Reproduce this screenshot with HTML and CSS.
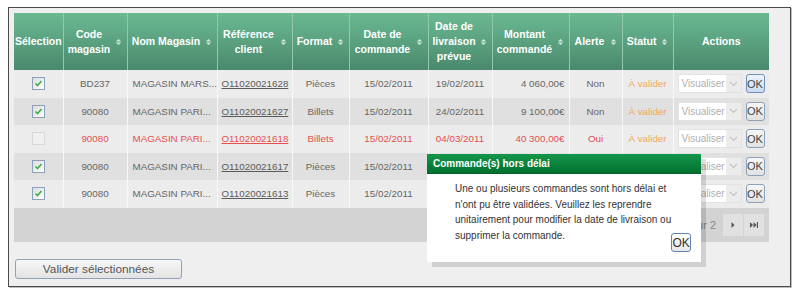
FILE: index.html
```html
<!DOCTYPE html>
<html>
<head>
  <title>Commandes</title>
  <link rel="stylesheet" href="styles.css">
</head>
<body>
  <div class="panel">
    <table class="grid">
      <colgroup>
        <col style="width: 49px">
        <col style="width: 64px">
        <col style="width: 90px">
        <col style="width: 75px">
        <col style="width: 57px">
        <col style="width: 79px">
        <col style="width: 64px">
        <col style="width: 77px">
        <col style="width: 53px">
        <col style="width: 51px">
        <col style="width: 96px">
      </colgroup>
      <thead>
        <tr>
          <th class="plain"><div class="th"><span class="lbl">Sélection</span></div></th>
          <th><div class="th"><span class="lbl">Code<br>magasin</span><svg class="sort-ico" viewBox="0 0 8 9"><polygon points="1,4 4,1 7,4"/><polygon points="1,5 4,8 7,5"/></svg></div></th>
          <th><div class="th"><span class="lbl">Nom Magasin</span><svg class="sort-ico" viewBox="0 0 8 9"><polygon points="1,4 4,1 7,4"/><polygon points="1,5 4,8 7,5"/></svg></div></th>
          <th><div class="th"><span class="lbl">Référence<br>client</span><svg class="sort-ico" viewBox="0 0 8 9"><polygon points="1,4 4,1 7,4"/><polygon points="1,5 4,8 7,5"/></svg></div></th>
          <th><div class="th"><span class="lbl">Format</span><svg class="sort-ico" viewBox="0 0 8 9"><polygon points="1,4 4,1 7,4"/><polygon points="1,5 4,8 7,5"/></svg></div></th>
          <th><div class="th"><span class="lbl">Date de<br>commande</span><svg class="sort-ico" viewBox="0 0 8 9"><polygon points="1,4 4,1 7,4"/><polygon points="1,5 4,8 7,5"/></svg></div></th>
          <th><div class="th"><span class="lbl">Date de<br>livraison<br>prévue</span><svg class="sort-ico" viewBox="0 0 8 9"><polygon points="1,4 4,1 7,4"/><polygon points="1,5 4,8 7,5"/></svg></div></th>
          <th><div class="th"><span class="lbl">Montant<br>commandé</span><svg class="sort-ico" viewBox="0 0 8 9"><polygon points="1,4 4,1 7,4"/><polygon points="1,5 4,8 7,5"/></svg></div></th>
          <th><div class="th"><span class="lbl">Alerte</span><svg class="sort-ico" viewBox="0 0 8 9"><polygon points="1,4 4,1 7,4"/><polygon points="1,5 4,8 7,5"/></svg></div></th>
          <th><div class="th"><span class="lbl">Statut</span><svg class="sort-ico" viewBox="0 0 8 9"><polygon points="1,4 4,1 7,4"/><polygon points="1,5 4,8 7,5"/></svg></div></th>
          <th class="plain"><div class="th"><span class="lbl">Actions</span></div></th>
        </tr>
      </thead>
      <tbody>
        <tr>
          <td><span class="chk"><svg viewBox="0 0 11 11"><path d="M2.5 5.5 L4.5 7.5 L8.5 3"/></svg></span></td>
          <td>BD237</td>
          <td class="left">MAGASIN MARS...</td>
          <td><a class="ref">O11020021628</a></td>
          <td>Pièces</td>
          <td>15/02/2011</td>
          <td>19/02/2011</td>
          <td class="right">4 060,00€</td>
          <td>Non</td>
          <td class="status">À valider</td>
          <td><div class="actions"><div class="sel"><span class="sel-txt">Visualiser</span><span class="sel-arrow"><svg viewBox="0 0 9 6"><path d="M1 1 L4.5 4.5 L8 1"/></svg></span></div><button class="ok focus">OK</button></div></td>
        </tr>
        <tr>
          <td><span class="chk"><svg viewBox="0 0 11 11"><path d="M2.5 5.5 L4.5 7.5 L8.5 3"/></svg></span></td>
          <td>90080</td>
          <td class="left">MAGASIN PARI...</td>
          <td><a class="ref">O11020021627</a></td>
          <td>Billets</td>
          <td>15/02/2011</td>
          <td>24/02/2011</td>
          <td class="right">9 100,00€</td>
          <td>Non</td>
          <td class="status">À valider</td>
          <td><div class="actions"><div class="sel"><span class="sel-txt">Visualiser</span><span class="sel-arrow"><svg viewBox="0 0 9 6"><path d="M1 1 L4.5 4.5 L8 1"/></svg></span></div><button class="ok">OK</button></div></td>
        </tr>
        <tr class="late">
          <td><span class="chk off"></span></td>
          <td>90080</td>
          <td class="left">MAGASIN PARI...</td>
          <td><a class="ref">O11020021618</a></td>
          <td>Billets</td>
          <td>15/02/2011</td>
          <td>04/03/2011</td>
          <td class="right">40 300,00€</td>
          <td>Oui</td>
          <td class="status">À valider</td>
          <td><div class="actions"><div class="sel"><span class="sel-txt">Visualiser</span><span class="sel-arrow"><svg viewBox="0 0 9 6"><path d="M1 1 L4.5 4.5 L8 1"/></svg></span></div><button class="ok">OK</button></div></td>
        </tr>
        <!-- rows below are partly covered by the dialog -->
        <tr>
          <td><span class="chk"><svg viewBox="0 0 11 11"><path d="M2.5 5.5 L4.5 7.5 L8.5 3"/></svg></span></td>
          <td>90080</td>
          <td class="left">MAGASIN PARI...</td>
          <td><a class="ref">O11020021617</a></td>
          <td>Pièces</td>
          <td>15/02/2011</td>
          <td></td>
          <td class="right"></td>
          <td></td>
          <td class="status"></td>
          <td><div class="actions"><div class="sel"><span class="sel-txt">Visualiser</span><span class="sel-arrow"><svg viewBox="0 0 9 6"><path d="M1 1 L4.5 4.5 L8 1"/></svg></span></div><button class="ok">OK</button></div></td>
        </tr>
        <tr>
          <td><span class="chk"><svg viewBox="0 0 11 11"><path d="M2.5 5.5 L4.5 7.5 L8.5 3"/></svg></span></td>
          <td>90080</td>
          <td class="left">MAGASIN PARI...</td>
          <td><a class="ref">O11020021613</a></td>
          <td>Pièces</td>
          <td>15/02/2011</td>
          <td></td>
          <td class="right"></td>
          <td></td>
          <td class="status"></td>
          <td><div class="actions"><div class="sel"><span class="sel-txt">Visualiser</span><span class="sel-arrow"><svg viewBox="0 0 9 6"><path d="M1 1 L4.5 4.5 L8 1"/></svg></span></div><button class="ok">OK</button></div></td>
        </tr>
      </tbody>
    </table>

    <div class="pager">
      <span class="pg-btn"><svg viewBox="0 0 10 8"><rect x="1" y="1" width="1.2" height="6"/><polygon points="5.5,1 2.5,4 5.5,7"/><polygon points="9,1 6,4 9,7"/></svg></span>
      <span class="pg-btn"><svg viewBox="0 0 10 8"><polygon points="6.5,1 3.5,4 6.5,7"/></svg></span>
      <span class="pg-text">Page 1 sur 2</span>
      <span class="pg-btn"><svg viewBox="0 0 10 8"><polygon points="3.5,1 6.5,4 3.5,7"/></svg></span>
      <span class="pg-btn"><svg viewBox="0 0 10 8"><polygon points="1,1 4,4 1,7"/><polygon points="4.5,1 7.5,4 4.5,7"/><rect x="7.8" y="1" width="1.2" height="6"/></svg></span>
    </div>

    <button class="btn-validate">Valider sélectionnées</button>

    <!-- Late orders dialog -->
    <div class="dialog">
      <div class="dialog-title">Commande(s) hors délai</div>
      <div class="dialog-body">
        <p>Une ou plusieurs commandes sont hors délai et<br>n'ont pu être validées. Veuillez les reprendre<br>unitairement pour modifier la date de livraison ou<br>supprimer la commande.</p>
        <button class="dialog-ok">OK</button>
      </div>
    </div>
  </div>
</body>
</html>
```

FILE: styles.css
```css
* {
  margin: 0;
  padding: 0;
  box-sizing: border-box;
}

html, body {
  width: 100%;
  height: 100%;
  overflow: hidden;
}

body {
  font-family: 'Liberation Sans', Arial, sans-serif;
  background: #ffffff;
  color: #666666;
}

.panel {
  position: relative;
  margin: 7px 0 0 8px;
  width: 783px;
  height: 280px;
  padding: 5px;
  background: #efefef;
  border: 1px solid #4a4a4a;
  box-shadow: 1px 1px 0 #bdbdbd;
}

/* Orders grid */
.grid {
  width: 755px;
  table-layout: fixed;
  border-collapse: collapse;
}

.grid th {
  height: 57px;
  padding: 0 5px 0 3px;
  background: linear-gradient(180deg, #6bb993 0%, #4a896c 100%);
  border-right: 1px solid #93c8ad;
  color: #ffffff;
  font-size: 10.5px;
  font-weight: bold;
  line-height: 15px;
  vertical-align: middle;
}

.grid th:last-child {
  border-right: none;
}

.grid th.plain {
  padding: 0 1px;
}

.th {
  display: flex;
  align-items: center;
  gap: 3px;
}

.lbl {
  flex: 1;
  text-align: center;
}

.sort-ico {
  width: 7px;
  height: 8px;
  fill: #d3e7dc;
}

.grid td {
  height: 27.5px;
  padding: 0 4px;
  font-size: 9.8px;
  text-align: center;
  vertical-align: middle;
  white-space: nowrap;
  overflow: hidden;
  border-right: 1px solid #f8f8f8;
  background: #ececec;
}

.grid td:last-child {
  border-right: none;
}

.grid tbody tr:nth-child(even) td {
  background: #e0e0e0;
}

.grid td.left {
  text-align: left;
  padding-left: 5px;
}

.grid td.right {
  text-align: right;
}

.ref {
  color: #5a5a5a;
  text-decoration: underline;
}

.status {
  color: #f2a75a;
}

.late td,
.late .ref {
  color: #e6504f;
}

.late td.status {
  color: #f2a75a;
}

.chk {
  display: inline-block;
  width: 13px;
  height: 13px;
  vertical-align: middle;
  border: 1px solid #8aa1b9;
  background: linear-gradient(135deg, #dcdcdc, #ffffff);
}

.chk svg {
  display: block;
  width: 11px;
  height: 11px;
  fill: none;
  stroke: #3db043;
  stroke-width: 1.6;
}

.chk.off {
  border-color: #d8d8d8;
  background: #f0f0f0;
}

.actions {
  display: flex;
  align-items: center;
  gap: 4px;
}

.sel {
  display: flex;
  width: 64px;
  height: 19px;
  background: #ffffff;
  border: 1px solid #e2e2e2;
}

.sel-txt {
  flex: 1;
  padding-left: 3px;
  line-height: 17px;
  font-size: 10px;
  color: #b0b0b0;
  text-align: left;
}

.sel-arrow {
  width: 15px;
  display: flex;
  align-items: center;
  justify-content: center;
  background: #ececec;
}

.sel-arrow svg {
  width: 9px;
  height: 6px;
  fill: none;
  stroke: #c4c4c4;
  stroke-width: 1.2;
}

.ok {
  width: 19px;
  height: 19px;
  font-family: 'Liberation Sans', Arial, sans-serif;
  font-size: 11px;
  color: #444444;
  border: 1px solid #8aa1b9;
  border-radius: 3px;
  background: linear-gradient(180deg, #f6f6f6, #e2e2e2);
}

.ok.focus {
  background: linear-gradient(180deg, #eef4fb, #c9dbef);
  border-color: #6f90b8;
}

/* Pagination band */
.pager {
  width: 755px;
  height: 34.5px;
  display: flex;
  align-items: center;
  justify-content: flex-end;
  gap: 1px;
  padding-right: 5px;
  background: #d3d3d3;
}

.pg-btn {
  width: 20px;
  height: 21.5px;
  display: flex;
  align-items: center;
  justify-content: center;
  background: #e1e1e1;
}

.pg-btn svg {
  width: 10px;
  height: 8px;
  fill: #555555;
}

.pg-text {
  margin: 0 6px;
  font-size: 11px;
  color: #8a8a8a;
}

.btn-validate {
  display: block;
  margin: 17px 0 0 1px;
  width: 167px;
  height: 20px;
  font-family: 'Liberation Sans', Arial, sans-serif;
  font-size: 11.8px;
  color: #555555;
  border: 1px solid #8ea3b8;
  border-radius: 3px;
  background: linear-gradient(180deg, #f7f7f7, #e3e3e3);
}

/* Modal dialog */
.dialog {
  position: absolute;
  left: 418px;
  top: 146px;
  width: 274px;
  height: 108px;
  background: #ffffff;
  box-shadow: 5px 5px 0 rgba(0, 0, 0, 0.13);
  display: flex;
  flex-direction: column;
}

.dialog-title {
  height: 20px;
  padding-left: 6px;
  line-height: 20px;
  font-size: 10px;
  font-weight: bold;
  color: #ffffff;
  background: linear-gradient(180deg, #14964a 0%, #017030 100%);
  border-bottom: 1px solid #0b5e2a;
}

.dialog-body {
  flex: 1;
  display: flex;
  align-items: flex-end;
  padding: 7px 10px 10px 28px;
}

.dialog-body p {
  font-size: 10px;
  line-height: 15.5px;
  color: #333333;
  white-space: nowrap;
  margin-bottom: 9px;
}

.dialog-ok {
  margin-left: auto;
  width: 23px;
  height: 19px;
  font-family: 'Liberation Sans', Arial, sans-serif;
  font-size: 12px;
  color: #333333;
  border: 1px solid #5f84ad;
  border-radius: 3px;
  background: linear-gradient(180deg, #ffffff, #e8e8e8);
}
```
